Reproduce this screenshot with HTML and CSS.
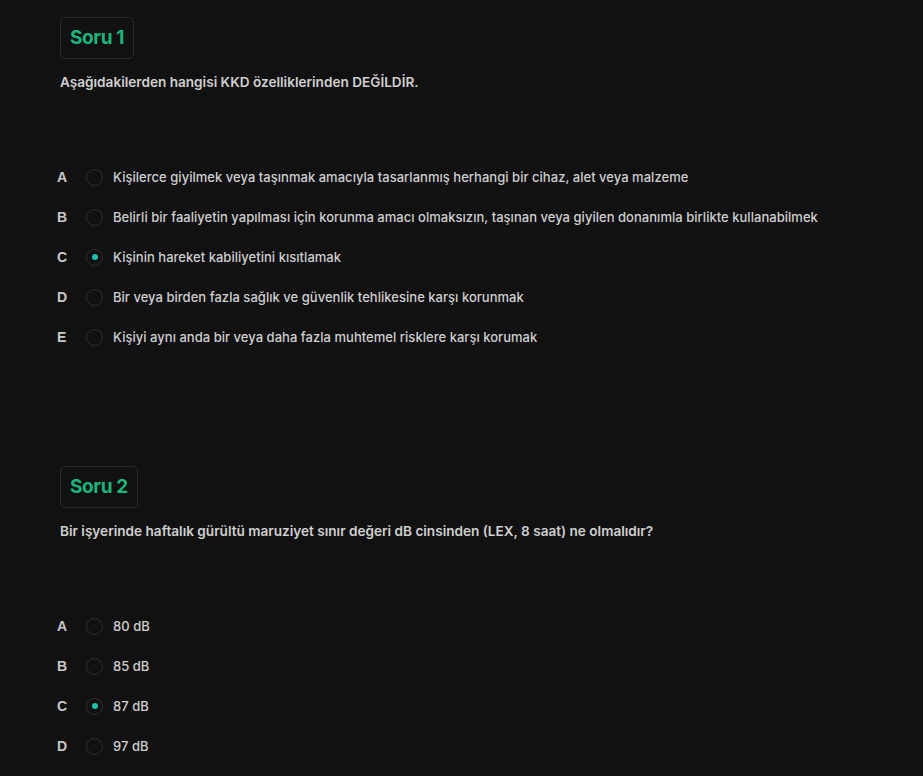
FILE: index.html
```html
<!DOCTYPE html>
<html lang="tr">
<head>
<meta charset="utf-8">
<link rel="stylesheet" href="styles.css">
</head>
<body>
<main class="quiz">
  <section class="question">
    <div class="badge">Soru 1</div>
    <p class="prompt">Aşağıdakilerden hangisi KKD özelliklerinden DEĞİLDİR.</p>
    <ul class="options">
      <li class="option"><span class="letter">A</span><span class="radio"></span><span class="text">Kişilerce giyilmek veya taşınmak amacıyla tasarlanmış herhangi bir cihaz, alet veya malzeme</span></li>
      <li class="option"><span class="letter">B</span><span class="radio"></span><span class="text">Belirli bir faaliyetin yapılması için korunma amacı olmaksızın, taşınan veya giyilen donanımla birlikte kullanabilmek</span></li>
      <li class="option"><span class="letter">C</span><span class="radio checked"></span><span class="text">Kişinin hareket kabiliyetini kısıtlamak</span></li>
      <li class="option"><span class="letter">D</span><span class="radio"></span><span class="text">Bir veya birden fazla sağlık ve güvenlik tehlikesine karşı korunmak</span></li>
      <li class="option"><span class="letter">E</span><span class="radio"></span><span class="text">Kişiyi aynı anda bir veya daha fazla muhtemel risklere karşı korumak</span></li>
    </ul>
  </section>
  <section class="question">
    <div class="badge">Soru 2</div>
    <p class="prompt">Bir işyerinde haftalık gürültü maruziyet sınır değeri dB cinsinden (LEX, 8 saat) ne olmalıdır?</p>
    <ul class="options">
      <li class="option"><span class="letter">A</span><span class="radio"></span><span class="text">80 dB</span></li>
      <li class="option"><span class="letter">B</span><span class="radio"></span><span class="text">85 dB</span></li>
      <li class="option"><span class="letter">C</span><span class="radio checked"></span><span class="text">87 dB</span></li>
      <li class="option"><span class="letter">D</span><span class="radio"></span><span class="text">97 dB</span></li>
    </ul>
  </section>
</main>
</body>
</html>
```
FILE: styles.css
```css
html, body {
  margin: 0;
  padding: 0;
  background: #111111;
}
body {
  font-family: "Inter", "Noto Sans", sans-serif;
  color: #cfcfcf;
  height: 776px;
  overflow: hidden;
}
.quiz {
  padding: 17px 0 0 60px;
}
.question + .question {
  margin-top: 109px;
}
.badge {
  display: inline-block;
  box-sizing: border-box;
  height: 42px;
  padding: 0 9px;
  border: 1px solid #2a2a2a;
  border-radius: 5px;
  font-size: 19px;
  line-height: 40px;
  font-weight: 700;
  color: #1db47c;
  letter-spacing: -0.4px;
}
.prompt {
  margin: 14px 0 0;
  font-size: 13.6px;
  line-height: 18px;
  font-weight: 600;
  color: #cfcfcf;
}
.options {
  list-style: none;
  margin: 66px 0 0 -3px;
  padding: 0;
}
.option {
  display: flex;
  align-items: center;
  height: 40px;
}
.letter {
  width: 29px;
  font-family: "Liberation Sans", Arial, sans-serif;
  font-weight: 700;
  font-size: 14px;
  color: #c8c8c8;
}
.radio {
  box-sizing: border-box;
  width: 17px;
  height: 17px;
  border: 1px solid #303030;
  border-radius: 50%;
  display: flex;
  align-items: center;
  justify-content: center;
  margin-right: 10px;
}
.radio.checked::after {
  content: "";
  width: 6px;
  height: 6px;
  border-radius: 50%;
  background: #19c1b0;
}
.text {
  font-size: 13px;
  font-weight: 500;
  color: #cfcfcf;
  letter-spacing: 0.03px;
}
```
